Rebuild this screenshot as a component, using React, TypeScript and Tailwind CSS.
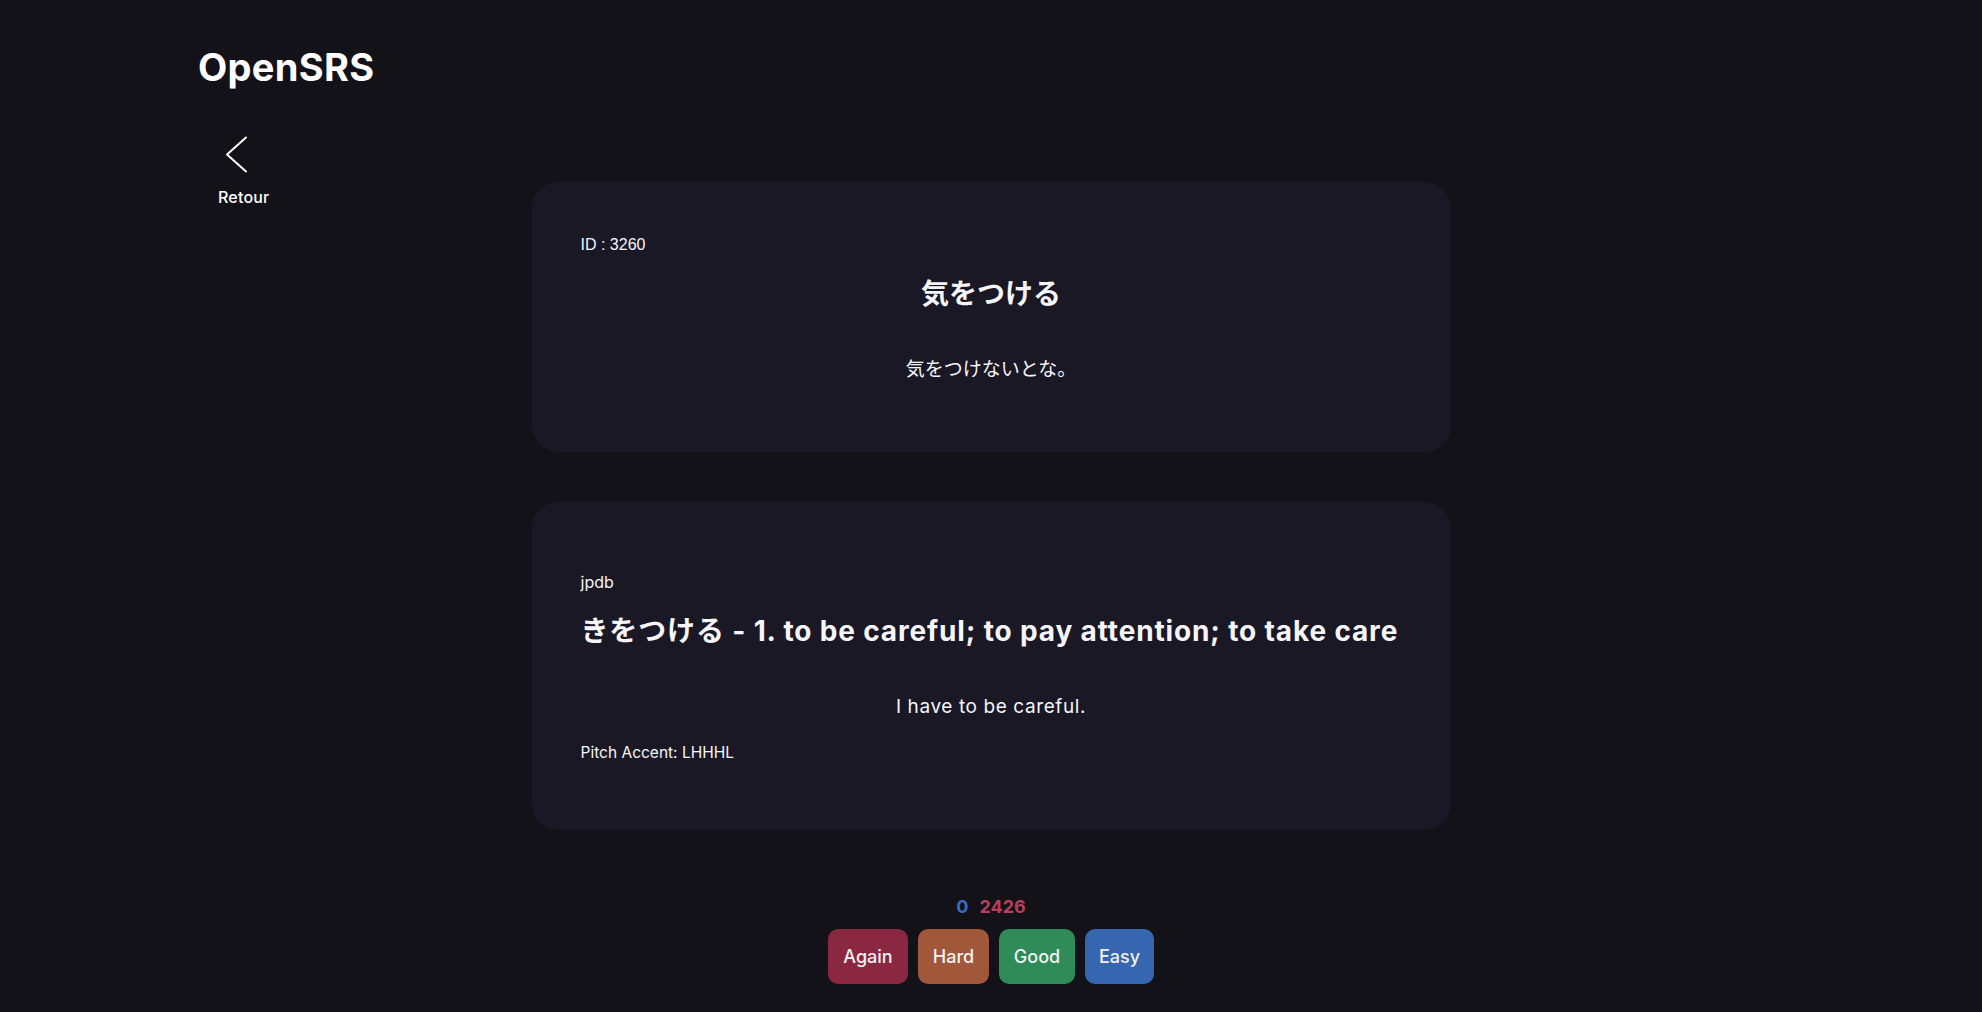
import React from "react";

const sans = "font-['Inter','Noto_Sans_CJK_JP',sans-serif]";

export default function App() {
  return (
    <div className={`min-h-screen w-full bg-[#131218] text-[#f5f5fa] ${sans}`}>
      <header className="pl-[198px] pt-[47px]">
        <h1 className="text-[38px] leading-[40px] font-bold tracking-[0.3px] text-white">OpenSRS</h1>
      </header>

      <div className="mt-[49px] grid grid-cols-[1fr_919px_1fr]">
        <div className="pl-[218px]">
          <button className="flex flex-col items-start text-white">
            <svg width="24" height="38" viewBox="0 0 24 38" className="ml-[7px]" fill="none">
              <polyline points="21,1.5 2,18.5 21,35.5" stroke="white" strokeWidth="2" strokeLinecap="round" strokeLinejoin="round" />
            </svg>
            <span className="mt-[13px] text-[16px] leading-[20px] font-medium tracking-[0.2px]">Retour</span>
          </button>
        </div>

        <main className="mt-[46px] flex flex-col gap-[50px]">
          <section className="rounded-[26px] bg-[#191824] px-[49px] pt-[51px] pb-[68px]">
            <div className="font-['Liberation_Sans','Noto_Sans_CJK_JP',sans-serif] text-[16px] leading-[24px]">ID : 3260</div>
            <h2 className="mt-[19px] text-center text-[28px] leading-[36px] font-bold">気をつける</h2>
            <p className="mt-[44px] text-center text-[19px] leading-[28px]">気をつけないとな。</p>
          </section>

          <section className="rounded-[26px] bg-[#191824] pl-[49px] pr-[40px] pt-[68px] pb-[65px]">
            <div className="text-[16px] leading-[24px]">jpdb</div>
            <h2 className="mt-[19px] whitespace-nowrap text-[28px] leading-[36px] font-bold tracking-[0.85px]">
              きをつける - 1. to be careful; to pay attention; to take care
            </h2>
            <p className="mt-[44px] pr-[9px] text-center text-[19px] leading-[28px] tracking-[0.6px]">I have to be careful.</p>
            <p className="mt-[20px] text-[15.5px] leading-[24px]">Pitch Accent: LHHHL</p>
          </section>
        </main>
        <div />
      </div>

      <div className="mt-[63px] flex flex-col items-center pb-[29px]">
        <div className="flex gap-[11px] text-[18px] leading-[28px] font-bold">
          <span className="text-[#3a6cc0]">0</span>
          <span className="text-[#b8405e]">2426</span>
        </div>
        <div className="mt-[8px] flex gap-[10px] text-[18px] font-medium text-[#f2f2f2]">
          <button className="flex h-[55px] w-[80px] items-center justify-center rounded-[10px] bg-[#8a2841]">Again</button>
          <button className="flex h-[55px] w-[71px] items-center justify-center rounded-[10px] bg-[#a0573a]">Hard</button>
          <button className="flex h-[55px] w-[76px] items-center justify-center rounded-[10px] bg-[#2f8c58]">Good</button>
          <button className="flex h-[55px] w-[69px] items-center justify-center rounded-[10px] bg-[#3566af]">Easy</button>
        </div>
      </div>
    </div>
  );
}
